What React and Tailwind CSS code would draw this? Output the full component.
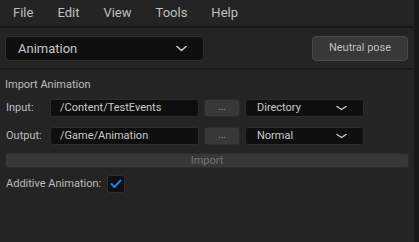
import React from 'react';

const menuItems = ['File', 'Edit', 'View', 'Tools', 'Help'];

const SmallChevron = () => (
  <svg width="11" height="6" viewBox="0 0 11 6" fill="none">
    <path d="M1 1.5 L5.5 4.5 L10 1.5" stroke="#c8c8c8" strokeWidth="1.4" strokeLinecap="round" strokeLinejoin="round" />
  </svg>
);

const PathRow = ({ label, value, mode }) => (
  <div className="flex items-center h-[18px]">
    <span className="w-[45px] pl-[1px] text-[11px] text-[#bdbdbd]">{label}</span>
    <div className="w-[149px] h-full flex items-center pl-[9px] bg-[#0f0f0f] border border-[#2b2b2b] rounded-[3px] text-[11px] text-[#cacaca]">
      {value}
    </div>
    <button className="ml-[5px] w-[36px] h-full bg-[#383838] border border-[#2b2b2b] rounded-[3px] text-[10px] leading-none text-[#9a9a9a] pb-[3px]">
      ...
    </button>
    <div className="ml-[5px] w-[119px] h-full flex items-center justify-between pl-[11px] pr-[16px] bg-[#0f0f0f] border border-[#2b2b2b] rounded-[3px] text-[11px] text-[#cacaca]">
      <span>{mode}</span>
      <SmallChevron />
    </div>
  </div>
);

const App = () => {
  return (
    <div className="w-[419px] h-[242px] flex bg-[#242424] overflow-hidden font-['Roboto','Liberation_Sans',sans-serif]">
      <div className="w-[414px] flex flex-col">
        {/* Menu bar */}
        <div className="h-[26px] flex items-center pl-[1px] text-[13px] text-[#bfbfbf]">
          {menuItems.map(item => (
            <span key={item} className="px-3">{item}</span>
          ))}
        </div>
        <div className="h-[2px] bg-[#171717]" />

        {/* Toolbar */}
        <div className="flex items-center justify-between pl-[5px] pr-[6px] mt-[8px]">
          <div className="w-[199px] h-[25px] flex items-center justify-between pl-[12px] pr-[16px] bg-[#0f0f0f] border border-[#2e2e2e] rounded-[4px] text-[13px] text-[#c8c8c8]">
            <span>Animation</span>
            <svg width="11" height="7" viewBox="0 0 11 7" fill="none">
              <path d="M1 1.5 L5.5 5.5 L10 1.5" stroke="#d0d0d0" strokeWidth="1.5" strokeLinecap="round" strokeLinejoin="round" />
            </svg>
          </div>
          <button className="w-[96px] h-[25px] bg-[#383838] border border-[#4a4a4a] rounded-[4px] text-[11px] text-[#bfbfbf]">
            Neutral pose
          </button>
        </div>
        <div className="h-[2px] bg-[#1a1a1a] mt-[7px]" />

        {/* Import section */}
        <div className="flex flex-col pl-[5px] pr-[5px]">
          <span className="mt-[8px] text-[11px] leading-[13px] text-[#bdbdbd]">Import Animation</span>
          <div className="mt-[8px] flex flex-col gap-[10px]">
            <PathRow label="Input:" value="/Content/TestEvents" mode="Directory" />
            <PathRow label="Output:" value="/Game/Animation" mode="Normal" />
          </div>
          <button className="mt-[8px] h-[15px] w-full bg-[#383838] border border-[#2b2b2b] rounded-[3px] text-[11px] leading-none text-[#727272]">
            Import
          </button>
          <div className="mt-[7px] flex items-center">
            <span className="pl-[1px] text-[11px] text-[#bdbdbd]">Additive Animation:</span>
            <div className="ml-[6px] w-[18px] h-[18px] flex items-center justify-center bg-[#0f0f0f] border border-[#2e2e2e] rounded-[3px]">
              <svg width="12" height="10" viewBox="0 0 12 10" fill="none">
                <path d="M1.5 5 L4.5 8 L10.5 1.5" stroke="#1f7fe6" strokeWidth="2" strokeLinecap="round" strokeLinejoin="round" />
              </svg>
            </div>
          </div>
        </div>
      </div>
      <div className="flex-1 bg-[#181818]" />
    </div>
  );
};

export default App;
